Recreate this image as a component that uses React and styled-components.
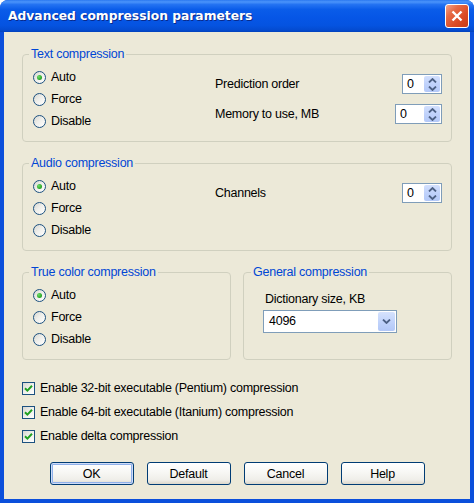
import React from "react";
import styled, { createGlobalStyle } from "styled-components";

const GlobalStyle = createGlobalStyle`
  html, body {
    margin: 0;
    padding: 0;
    background: #ffffff;
  }
  body {
    font-family: "Liberation Sans", Arial, sans-serif;
    font-size: 12.5px;
    letter-spacing: -0.25px;
    color: #000;
  }
`;

const Window = styled.div`
  width: 474px;
  height: 503px;
  display: flex;
  flex-direction: column;
  overflow: hidden;
  border-radius: 8px 8px 0 0;
  background: #0b4fdb;
`;

const TitleBar = styled.div`
  height: 32px;
  flex: none;
  display: flex;
  align-items: center;
  justify-content: space-between;
  padding: 0 5px 0 8px;
  box-sizing: border-box;
  background: linear-gradient(
    180deg,
    #2b78f0 0%,
    #4b94fa 6%,
    #2473f2 14%,
    #0a5ce9 30%,
    #0656e6 55%,
    #0553e0 80%,
    #044bd0 94%,
    #0342bc 100%
  );
`;

const Title = styled.span`
  font-family: "DejaVu Sans", Tahoma, sans-serif;
  font-weight: bold;
  font-size: 12.3px;
  letter-spacing: 0;
  color: #fff;
  text-shadow: 1px 1px 0 #0a2a8a;
`;

const CloseButton = styled.span`
  width: 24px;
  height: 24px;
  box-sizing: border-box;
  border: 1px solid #fff;
  border-radius: 3px;
  display: flex;
  align-items: center;
  justify-content: center;
  background: linear-gradient(135deg, #f2a48c 0%, #e66a45 30%, #db4a24 65%, #c63c17 100%);
`;

const Body = styled.div`
  flex: 1;
  display: flex;
  flex-direction: column;
  background: #ece9d8;
  border: 4px solid #0b4fdb;
  border-top: 0;
  padding: 15px 18px 0 18px;
`;

const Group = styled.fieldset`
  margin: ${(p) => p.$top ?? 0}px 0 0 0;
  padding: 5px 9px 9px ${(p) => p.$padLeft ?? 10}px;
  border: 1px solid #d0d0bf;
  border-radius: 4px;
  min-width: 0;
`;

const Legend = styled.legend`
  padding: 0 2px;
  margin-left: ${(p) => p.$shift ?? -4}px;
  color: #0046d5;
  line-height: 14px;
`;

const GroupBody = styled.div`
  display: grid;
  grid-template-columns: 182px 1fr;
`;

const OptionList = styled.div`
  display: flex;
  flex-direction: column;
`;

const Option = styled.label`
  height: 22px;
  display: flex;
  align-items: center;
  gap: 5px;
`;

const RadioMark = styled.span`
  position: relative;
  width: 13px;
  height: 13px;
  box-sizing: border-box;
  border-radius: 50%;
  border: 1px solid #1c5180;
  background: linear-gradient(135deg, #d6d6d0 0%, #eeeeea 45%, #ffffff 100%);

  &::after {
    content: "";
    display: ${(p) => (p.$checked ? "block" : "none")};
    position: absolute;
    left: 3px;
    top: 3px;
    width: 5px;
    height: 5px;
    border-radius: 50%;
    background: radial-gradient(circle at 35% 35%, #6fdc6a 0%, #2dab2a 60%, #1f8f1f 100%);
  }
`;

const SettingList = styled.div`
  display: flex;
  flex-direction: column;
  padding-top: 3px;
`;

const SettingRow = styled.div`
  height: 30px;
  display: flex;
  align-items: center;
  justify-content: space-between;
`;

const SpinBox = styled.div`
  width: ${(p) => p.$width}px;
  height: 20px;
  box-sizing: border-box;
  border: 1px solid #7f9db9;
  background: #fff;
  display: flex;
  padding: 1px;
`;

const SpinValue = styled.span`
  flex: 1;
  padding-left: 3px;
  line-height: 16px;
`;

const SpinButtons = styled.div`
  width: 16px;
  display: flex;
  flex-direction: column;
  border-radius: 2px;
  overflow: hidden;
  background: linear-gradient(180deg, #d3e0fd 0%, #c0d2fb 50%, #b4c9f8 100%);
`;

const SpinButton = styled.span`
  flex: 1;
  display: flex;
  align-items: center;
  justify-content: center;
`;

const GeneralBody = styled.div`
  display: flex;
  flex-direction: column;
  padding-top: 7px;
`;

const FieldLabel = styled.span`
  padding-left: 2px;
  line-height: 16px;
`;

const Combo = styled.div`
  margin-top: 3px;
  width: 134px;
  height: 23px;
  box-sizing: border-box;
  border: 1px solid #7f9db9;
  background: #fff;
  display: flex;
  padding: 1px;
`;

const ComboValue = styled.span`
  flex: 1;
  padding-left: 4px;
  line-height: 19px;
`;

const ComboButton = styled.span`
  width: 17px;
  border-radius: 2px;
  display: flex;
  align-items: center;
  justify-content: center;
  background: linear-gradient(180deg, #d6e2fd 0%, #c2d4fb 50%, #b2c7f7 100%);
`;

const SplitRow = styled.div`
  margin-top: 14px;
  display: grid;
  grid-template-columns: 1fr 1fr;
  gap: 12px;
`;

const CheckList = styled.div`
  margin-top: 16px;
  display: flex;
  flex-direction: column;
`;

const CheckRow = styled.label`
  height: 24px;
  display: flex;
  align-items: center;
  gap: 5px;
`;

const CheckMark = styled.span`
  width: 13px;
  height: 13px;
  box-sizing: border-box;
  border: 1px solid #1c5180;
  background: linear-gradient(135deg, #d6d6d0 0%, #eeeeea 45%, #ffffff 100%);
  display: flex;
  align-items: center;
  justify-content: center;
`;

const ButtonRow = styled.div`
  margin-top: 14px;
  display: flex;
  justify-content: center;
  gap: 13px;
`;

const Button = styled.button`
  width: 84px;
  height: 23px;
  padding: 0;
  font: inherit;
  letter-spacing: -0.25px;
  color: #000;
  border: 1px solid #003c74;
  border-radius: 3px;
  background: linear-gradient(180deg, #ffffff 0%, #f7f7f4 45%, #efeee9 80%, #dcd7cb 100%);
  box-shadow: ${(p) =>
    p.$default ? "inset 0 0 0 1px #cfdcf6, inset 0 0 0 2px #8fb0ea" : "none"};
`;

const Chevron = ({ dir }) => (
  <svg width="9" height="5" viewBox="0 0 9 5">
    <path
      d={dir === "up" ? "M1 4.5 L4.5 1 L8 4.5" : "M1 0.5 L4.5 4 L8 0.5"}
      fill="none"
      stroke="#4d6185"
      strokeWidth="1.8"
    />
  </svg>
);

const Spin = ({ value, width }) => (
  <SpinBox $width={width}>
    <SpinValue>{value}</SpinValue>
    <SpinButtons>
      <SpinButton>
        <Chevron dir="up" />
      </SpinButton>
      <SpinButton>
        <Chevron dir="down" />
      </SpinButton>
    </SpinButtons>
  </SpinBox>
);

const Modes = () => (
  <OptionList>
    {["Auto", "Force", "Disable"].map((m, i) => (
      <Option key={m}>
        <RadioMark $checked={i === 0} />
        {m}
      </Option>
    ))}
  </OptionList>
);

const Check = ({ children }) => (
  <CheckRow>
    <CheckMark>
      <svg width="9" height="9" viewBox="0 0 9 9">
        <path d="M1 4.2 L3.4 6.6 L8 1.8" fill="none" stroke="#21a121" strokeWidth="2" />
      </svg>
    </CheckMark>
    {children}
  </CheckRow>
);

const App = () => (
  <>
    <GlobalStyle />
    <Window>
      <TitleBar>
        <Title>Advanced compression parameters</Title>
        <CloseButton>
          <svg width="12" height="12" viewBox="0 0 12 12">
            <path d="M1.5 1.5 L10.5 10.5 M10.5 1.5 L1.5 10.5" stroke="#fff" strokeWidth="2.4" />
          </svg>
        </CloseButton>
      </TitleBar>
      <Body>
        <Group>
          <Legend>Text compression</Legend>
          <GroupBody>
            <Modes />
            <SettingList>
              <SettingRow>
                Prediction order
                <Spin value="0" width={40} />
              </SettingRow>
              <SettingRow>
                Memory to use, MB
                <Spin value="0" width={47} />
              </SettingRow>
            </SettingList>
          </GroupBody>
        </Group>

        <Group $top={14}>
          <Legend>Audio compression</Legend>
          <GroupBody>
            <Modes />
            <SettingList>
              <SettingRow>
                Channels
                <Spin value="0" width={40} />
              </SettingRow>
            </SettingList>
          </GroupBody>
        </Group>

        <SplitRow>
          <Group>
            <Legend>True color compression</Legend>
            <Modes />
          </Group>
          <Group $padLeft={19}>
            <Legend $shift={-12}>General compression</Legend>
            <GeneralBody>
              <FieldLabel>Dictionary size, KB</FieldLabel>
              <Combo>
                <ComboValue>4096</ComboValue>
                <ComboButton>
                  <Chevron dir="down" />
                </ComboButton>
              </Combo>
            </GeneralBody>
          </Group>
        </SplitRow>

        <CheckList>
          <Check>Enable 32-bit executable (Pentium) compression</Check>
          <Check>Enable 64-bit executable (Itanium) compression</Check>
          <Check>Enable delta compression</Check>
        </CheckList>

        <ButtonRow>
          <Button $default>OK</Button>
          <Button>Default</Button>
          <Button>Cancel</Button>
          <Button>Help</Button>
        </ButtonRow>
      </Body>
    </Window>
  </>
);

export default App;
